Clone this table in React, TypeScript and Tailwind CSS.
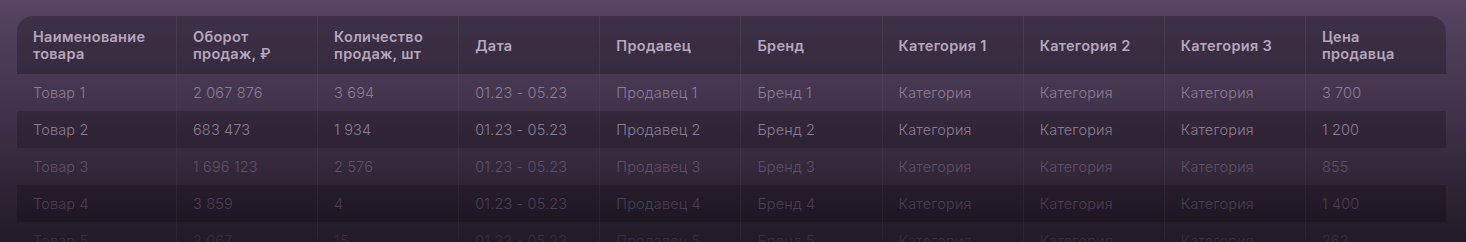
import React from 'react';

const headers = [
  ['Наименование', 'товара'],
  ['Оборот', 'продаж, ₽'],
  ['Количество', 'продаж, шт'],
  ['Дата'],
  ['Продавец'],
  ['Бренд'],
  ['Категория 1'],
  ['Категория 2'],
  ['Категория 3'],
  ['Цена', 'продавца'],
];

const rows = [
  ['Товар 1', '2 067 876', '3 694', '01.23 - 05.23', 'Продавец 1', 'Бренд 1', 'Категория', 'Категория', 'Категория', '3 700'],
  ['Товар 2', '683 473', '1 934', '01.23 - 05.23', 'Продавец 2', 'Бренд 2', 'Категория', 'Категория', 'Категория', '1 200'],
  ['Товар 3', '1 696 123', '2 576', '01.23 - 05.23', 'Продавец 3', 'Бренд 3', 'Категория', 'Категория', 'Категория', '855'],
  ['Товар 4', '3 859', '4', '01.23 - 05.23', 'Продавец 4', 'Бренд 4', 'Категория', 'Категория', 'Категория', '1 400'],
  ['Товар 5', '2 067', '15', '01.23 - 05.23', 'Продавец 5', 'Бренд 5', 'Категория', 'Категория', 'Категория', '363'],
];

// row look: background + text colour, fading out towards the bottom
const rowStyles = [
  'text-[#8c7c97]',
  'bg-black/20 text-[#8a7d93]',
  'text-[#5e5067]',
  'bg-black/20 text-[#4b3f53]',
  'text-[#392e3f]',
];

const grid = 'grid grid-cols-[159px_repeat(9,minmax(0,1fr))]';

const App = () => {
  return (
    <div
      className="h-[242px] overflow-hidden bg-linear-to-b from-[#574563] via-[#3f3148] to-[#221a26] pt-4 pl-[17px] pr-[20px]"
      style={{ fontFamily: 'Inter, "Noto Sans", sans-serif' }}
    >
      <div className={`${grid} h-[58px] rounded-t-[16px] bg-black/25`}>
        {headers.map((h, i) => (
          <div
            key={i}
            className={`flex flex-col justify-center px-4 text-[14.5px] leading-[17px] tracking-[0.02em] font-semibold text-[#b5a7bd] ${i ? 'border-l border-white/[0.06]' : ''}`}
          >
            {h.map((line) => (
              <span key={line}>{line}</span>
            ))}
          </div>
        ))}
      </div>
      {rows.map((r, ri) => (
        <div key={ri} className={`${grid} h-[37px] ${rowStyles[ri]}`}>
          {r.map((c, ci) => (
            <div
              key={ci}
              className={`flex items-center px-4 text-[14.5px] font-light tracking-[0.01em] ${ci ? 'border-l border-white/[0.04]' : ''}`}
            >
              {c}
            </div>
          ))}
        </div>
      ))}
    </div>
  );
};

export default App;
